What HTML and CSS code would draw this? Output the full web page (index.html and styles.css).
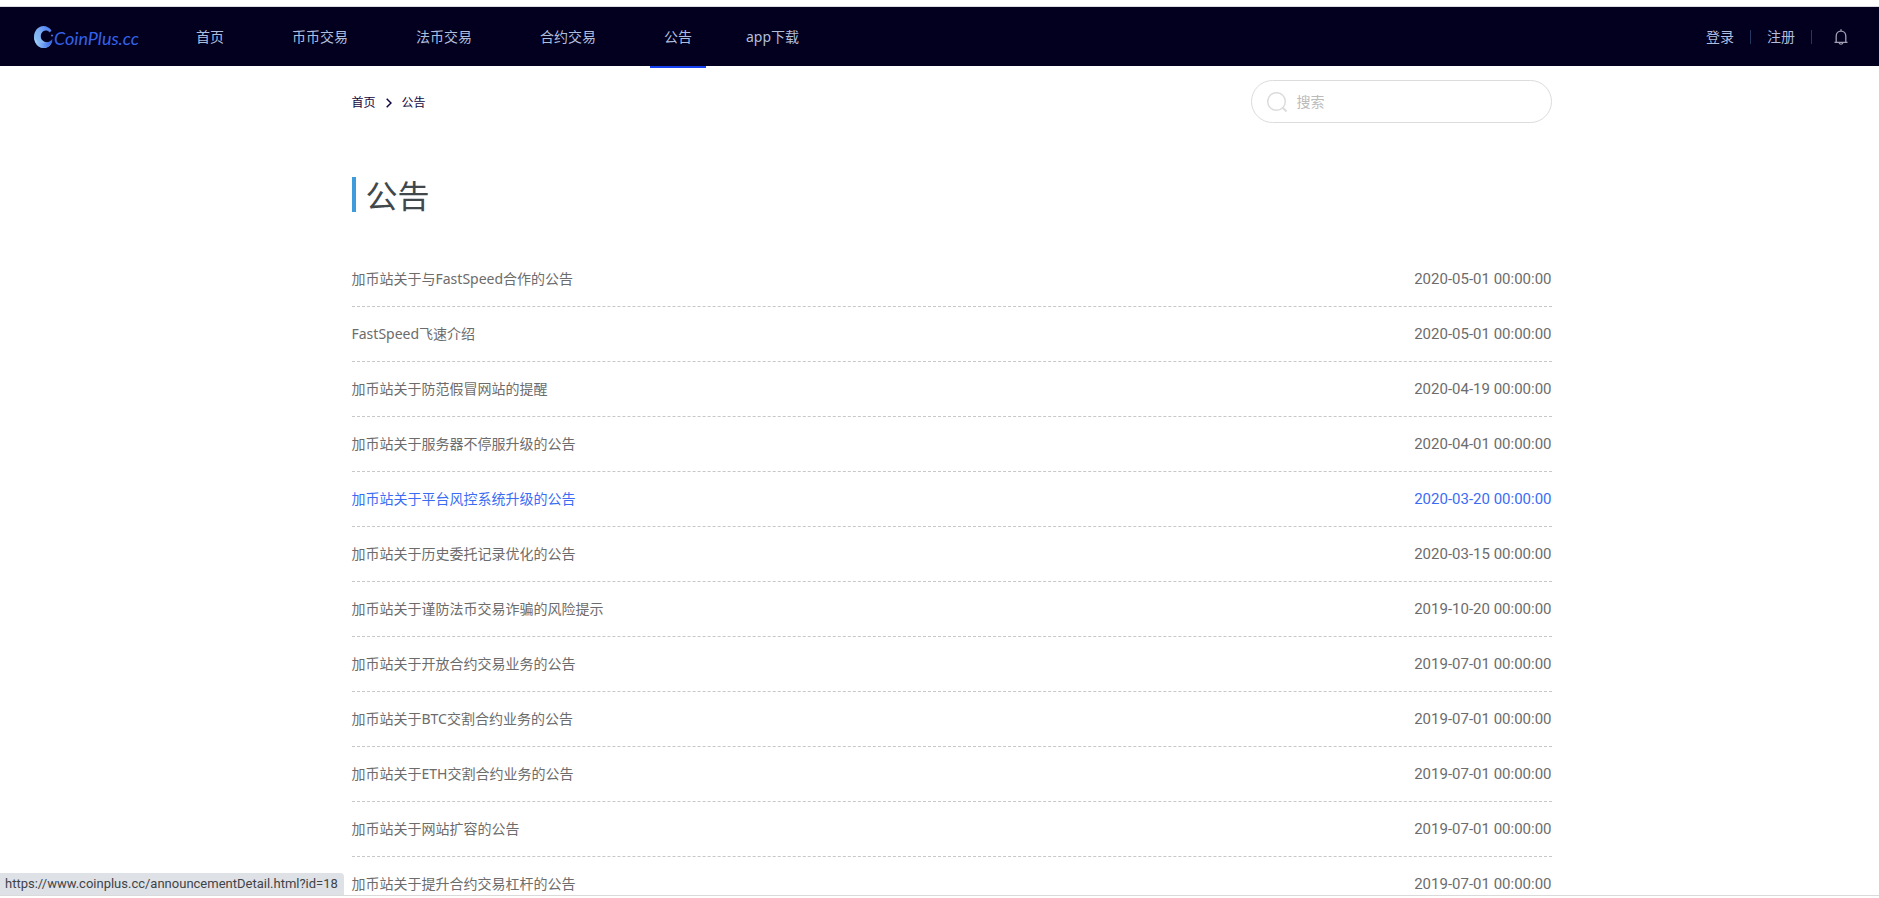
FILE: index.html
```html
<!DOCTYPE html>
<html lang="zh-CN">
<head>
<meta charset="utf-8">
<title>公告 - CoinPlus.cc</title>
<link rel="stylesheet" href="styles.css">
</head>
<body>
<div class="page">
  <header class="header">
    <a class="logo" href="#" aria-label="CoinPlus.cc">
      <svg class="logo-mark" viewBox="0 0 20 22" aria-hidden="true">
        <defs>
          <linearGradient id="mark" x1="0" y1="1" x2="1" y2="0">
            <stop offset="0" stop-color="#8fc6f6"/>
            <stop offset="0.5" stop-color="#7fb0f4"/>
            <stop offset="1" stop-color="#3f6ef0"/>
          </linearGradient>
          <linearGradient id="wave" x1="0" y1="0" x2="1" y2="0">
            <stop offset="0" stop-color="#a9d8fa"/>
            <stop offset="1" stop-color="#2f5ee8"/>
          </linearGradient>
        </defs>
        <path fill="url(#mark)" d="M17.500 4.500C15.500 1.500 12.500 0 9.500 0C4 0 0 5 0 11C0 17.500 4.500 22 10 22C14 22 17 19.500 18.300 15C16 16.500 12.500 17 10 15.500C7.500 14 6.500 12 6.800 9.500C7.200 6.500 9.500 4.200 12.500 4.500C14 4.700 15 5.500 15.700 6.500Z"/>
        <path fill="url(#wave)" d="M0.300 11C2 15.500 8 17.500 12.500 16.500C15 16 17 15 18.500 13C17.800 18.500 14 22 10 22C4.500 22 0.600 17.500 0.300 11Z"/>
        <circle cx="18" cy="9.500" r="1" fill="#4a7df0"/>
      </svg>
      <span class="logo-text">CoinPlus.cc</span>
    </a>
    <nav class="nav">
      <a class="nav-link" href="#">首页</a>
      <a class="nav-link" href="#">币币交易</a>
      <a class="nav-link" href="#">法币交易</a>
      <a class="nav-link" href="#">合约交易</a>
      <a class="nav-link active" href="#">公告</a>
      <a class="nav-link" href="#">app下载</a>
    </nav>
    <div class="account">
      <a class="account-link" href="#">登录</a>
      <a class="account-link" href="#">注册</a>
      <button class="bell" type="button" aria-label="通知">
        <svg viewBox="0 0 14 16" aria-hidden="true">
          <path fill="none" stroke="#a0a0b4" stroke-width="1.300" d="M0.500 13.300H13.500M2.200 13.300V7.200C2.200 4.200 4.300 2.200 7 2.200S11.800 4.200 11.800 7.200V13.300M5.200 14C5.500 15.600 8.500 15.600 8.800 14M7 0.300V2.200"/>
        </svg>
      </button>
    </div>
  </header>

  <main class="main">
    <div class="container">
      <div class="toolbar">
        <nav class="crumbs" aria-label="面包屑">
          <a href="#">首页</a>
          <svg class="chevron" viewBox="0 0 6 10" aria-hidden="true"><path fill="none" stroke="#120540" stroke-width="1.500" d="M0.700 0.700L5 5L0.700 9.300"/></svg>
          <a href="#">公告</a>
        </nav>
        <label class="search">
          <svg class="search-icon" viewBox="0 0 20 20" aria-hidden="true"><circle cx="9.500" cy="9.500" r="8.800" fill="none" stroke="#dcdcdc" stroke-width="1.500"/><path d="M15.500 15.500L19.500 19.500" stroke="#dcdcdc" stroke-width="2"/></svg>
          <input class="search-input" type="text" placeholder="搜索" aria-label="搜索">
        </label>
      </div>
      <h1 class="title">公告</h1>
      <ul class="list">
        <li><a class="item" href="#"><span>加币站关于与FastSpeed合作的公告</span><time>2020-05-01 00:00:00</time></a></li>
        <li><a class="item" href="#"><span>FastSpeed飞速介绍</span><time>2020-05-01 00:00:00</time></a></li>
        <li><a class="item" href="#"><span>加币站关于防范假冒网站的提醒</span><time>2020-04-19 00:00:00</time></a></li>
        <li><a class="item" href="#"><span>加币站关于服务器不停服升级的公告</span><time>2020-04-01 00:00:00</time></a></li>
        <li><a class="item hovered" href="#"><span>加币站关于平台风控系统升级的公告</span><time>2020-03-20 00:00:00</time></a></li>
        <li><a class="item" href="#"><span>加币站关于历史委托记录优化的公告</span><time>2020-03-15 00:00:00</time></a></li>
        <li><a class="item" href="#"><span>加币站关于谨防法币交易诈骗的风险提示</span><time>2019-10-20 00:00:00</time></a></li>
        <li><a class="item" href="#"><span>加币站关于开放合约交易业务的公告</span><time>2019-07-01 00:00:00</time></a></li>
        <li><a class="item" href="#"><span>加币站关于BTC交割合约业务的公告</span><time>2019-07-01 00:00:00</time></a></li>
        <li><a class="item" href="#"><span>加币站关于ETH交割合约业务的公告</span><time>2019-07-01 00:00:00</time></a></li>
        <li><a class="item" href="#"><span>加币站关于网站扩容的公告</span><time>2019-07-01 00:00:00</time></a></li>
        <li><a class="item" href="#"><span>加币站关于提升合约交易杠杆的公告</span><time>2019-07-01 00:00:00</time></a></li>
      </ul>
    </div>
  </main>
  <div class="status">https://www.coinplus.cc/announcementDetail.html?id=18</div>
</div>
</body>
</html>
```
FILE: styles.css
```css
* {
  box-sizing: border-box;
}

body {
  margin: 0;
  height: 100vh;
  padding: 6px 0 2px;
  overflow: hidden;
  background: #fff;
  color: #6c6c6c;
  font-family: "Noto Sans", "Noto Sans CJK SC", sans-serif;
  font-size: 14px;
  line-height: 20px;
}

a {
  color: inherit;
  text-decoration: none;
}

.page {
  position: relative;
  height: 100%;
  overflow: hidden;
  border-top: 1px solid #dadce0;
  border-bottom: 1px solid #dadada;
}

.header {
  display: flex;
  align-items: center;
  height: 59px;
  padding: 0 31px 0 34px;
  background: #03001f;
  color: #b0bede;
}

.logo {
  display: flex;
  align-items: center;
  width: 148px;
}

.logo-mark {
  width: 20px;
  height: 22px;
}

.logo-text {
  padding-top: 2px;
  color: #3462e8;
  font-family: Lato, sans-serif;
  font-size: 18px;
  font-style: italic;
}

.nav {
  display: flex;
  align-self: stretch;
}

.nav-link {
  position: relative;
  padding: 20px 14px 0;
  margin-right: 40px;
}

.nav-link.active {
  margin-right: 26px;
}

.nav-link.active::after {
  content: "";
  position: absolute;
  left: 0;
  right: 0;
  bottom: -2px;
  height: 2px;
  background: #1740f0;
}

.account {
  display: flex;
  align-items: center;
  margin-left: auto;
}

.account-link {
  display: flex;
  align-items: center;
}

.account-link::after {
  content: "";
  width: 1px;
  height: 14px;
  margin: 0 16px;
  background: #24385f;
}

.bell {
  display: flex;
  margin-left: 6px;
  padding: 0;
  border: 0;
  background: none;
}

.bell svg {
  width: 14px;
  height: 16px;
}

.main {
  padding-left: 24px;
}

.container {
  width: 100%;
  max-width: 1200px;
  margin: 0 auto;
}

.toolbar {
  display: flex;
  align-items: center;
  justify-content: space-between;
  padding-top: 14px;
}

.crumbs {
  display: flex;
  align-items: center;
  gap: 10px;
  padding-top: 2px;
  color: #120540;
  font-size: 12px;
}

.chevron {
  width: 6px;
  height: 10px;
}

.search {
  display: flex;
  align-items: center;
  gap: 10px;
  width: 301px;
  height: 43px;
  padding: 0 15px;
  border: 1px solid #dcdcdc;
  border-radius: 22px;
}

.search-icon {
  flex: none;
  width: 20px;
  height: 20px;
}

.search-input {
  flex: 1;
  min-width: 0;
  padding: 0;
  border: 0;
  outline: 0;
  background: none;
  font: inherit;
}

.search-input::placeholder {
  color: #bbb;
}

.title {
  margin: 54px 0 0;
  padding: 2px 0 0 10px;
  border-left: 4px solid #409bdb;
  color: #40484c;
  font-size: 32px;
  font-weight: 400;
  line-height: 33px;
}

.list {
  margin: 40px 0 0;
  padding: 0;
  list-style: none;
}

.item {
  display: flex;
  align-items: center;
  justify-content: space-between;
  height: 55px;
  padding-bottom: 1px;
  border-bottom: 1px dashed #c8c8c8;
}

.item time {
  font-family: Roboto, sans-serif;
  font-size: 15px;
}

.item.hovered {
  color: #3a6cf4;
}

.status {
  position: absolute;
  left: 0;
  bottom: 0;
  padding: 1px 6px 1px 5px;
  border-top-right-radius: 4px;
  background: #dee1e6;
  color: #404448;
  font-family: Roboto, sans-serif;
  font-size: 13px;
}
```
